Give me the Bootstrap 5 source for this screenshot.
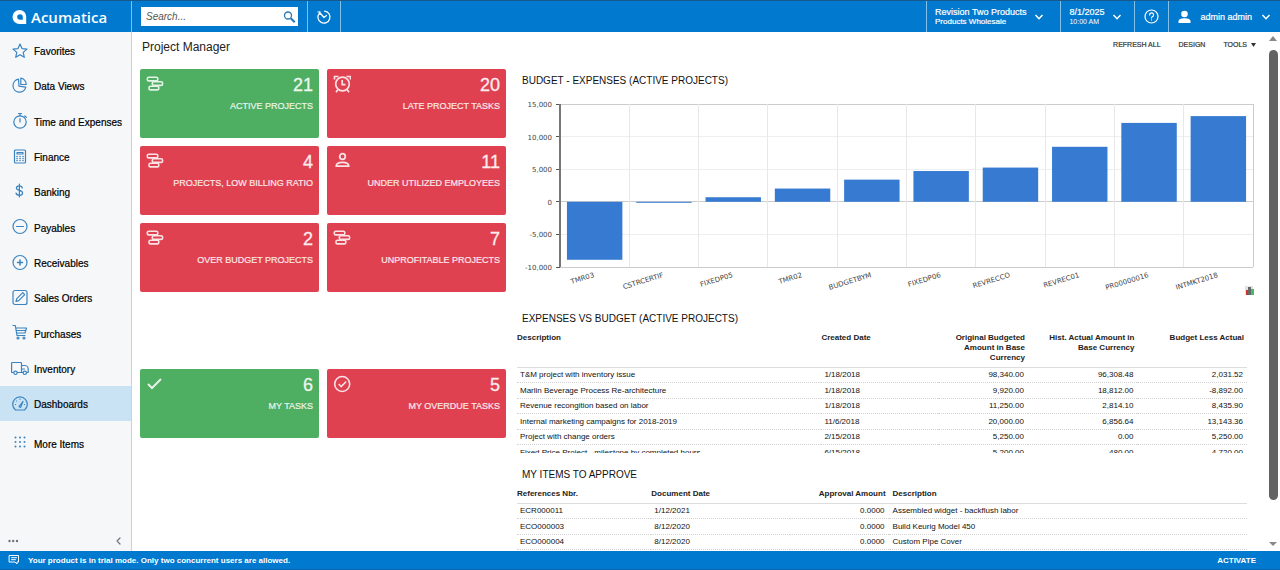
<!DOCTYPE html>
<html lang="en">
<head>
<meta charset="utf-8">
<meta name="viewport" content="width=device-width, initial-scale=1">
<title>Project Manager - Acumatica</title>
<link href="https://cdn.jsdelivr.net/npm/bootstrap@5.3.0/dist/css/bootstrap.min.css" rel="stylesheet">
<style>
:root{--brand:#0079cf;--line:#83c1ea;--ico:#3c84bf}
body{font-family:"Liberation Sans",Arial,sans-serif;font-size:10px;line-height:12px;color:#111;background:#fff}
button{font:inherit;color:inherit;background:none;border:0;padding:0}
a{color:inherit;text-decoration:none}
svg{display:block;flex:none}
.stroke{fill:none;stroke:currentColor;stroke-width:1.2;stroke-linecap:round;stroke-linejoin:round}
.topbar{background:var(--brand);color:#fff;border-top:1px solid #17598c;min-height:32px}
.topbar .cell{border-left:1px solid var(--line)}
.logo-box{width:131px;padding-left:12px;gap:4px;font:600 15px/18px "Open Sans",sans-serif}
.search-box{width:157px;height:19px;background:#fff;margin:0 9px}
.search-box input{border:0;outline:0;min-width:0;font-size:10px;font-style:italic;padding:0 0 0 5px;background:none;color:#333}
.search-box input::placeholder{color:#555;opacity:1}
.fs-9{font-size:9px;line-height:10px;-webkit-text-stroke:.2px}
.fs-8{font-size:8px;line-height:9px;-webkit-text-stroke:.2px}
.fs-7{font-size:7px;line-height:10px}
.side{width:132px;background:#f5f7f9;border-right:1px solid #c3d3e2;padding-top:1px}
.side a{height:35px;padding-left:11px;gap:5px;color:#000;-webkit-text-stroke:.2px}
.side li:nth-child(3n) a{height:36px}
.side li:last-child a{margin-top:4px}
.side a span{padding-top:3px}
.side a svg{color:var(--ico);width:18px;height:18px}
.side a.active{background:#c9e3f5}
.page-head{padding:8px 10px 0;margin-bottom:15px}
.page-title{font-size:12px;line-height:14px;color:#222}
.tools{gap:18px;color:#333;-webkit-text-stroke:.2px}
.board{padding:0 12px 0 8px}
.tile{min-height:69px;border-radius:2px;color:#fff;padding:6px;background:#e04151}
.tile.good{background:#4eae62}
.tile svg{width:18px;height:18px;opacity:.85}
.tile .num{font-size:18px;line-height:20px;opacity:.9;-webkit-text-stroke:.3px}
.tile .cap{font-size:9px;line-height:12px;opacity:.88;margin-top:5px;-webkit-text-stroke:.2px}
.tile-gap{margin-top:77px}
.chart-panel{padding-top:6px}
.section-title{font-size:10px;line-height:12px;margin:0;padding-left:8px;color:#111;font-weight:400}
.chart{width:100%;height:auto;font-family:"DejaVu Sans",sans-serif;font-size:7px;fill:#444}
.list{width:calc(100% - 10px);table-layout:fixed;font-size:8px;line-height:10px;color:#111;margin-left:3px}
.list th{padding:0 3px 0 0;vertical-align:top;color:#222;border-bottom:1px solid #ddd}
.list td{padding:1px 4px 0 3px;height:15px;border-bottom:1px dotted #d2d2d2;white-space:nowrap}
.list tr:nth-child(even) td{height:16px}
.clip-a{height:120px;overflow:hidden}
.clip-b{height:61px;overflow:hidden}
.list.plan thead th{height:34px}
.list.appr thead th{height:14px}
.scroller{width:14px;color:#888}
.thumb{width:9px;border-radius:5px;background:#636363;height:88%}
.statusbar{background:var(--brand);color:#fff;height:19px;border-bottom:1px solid #0b67ad;font-size:8px;font-weight:700}
.statusbar span,.statusbar button{padding-top:1px}
</style>
</head>
<body class="vh-100 d-flex flex-column overflow-hidden">
<svg width="0" height="0" class="position-absolute" aria-hidden="true">
  <symbol id="gantt" viewBox="0 0 18 18"><g fill="none" stroke="currentColor" stroke-width="1.600"><rect x="1.300" y="2.300" width="10.500" height="3.600" rx="1.500"/><rect x="6.300" y="6.800" width="10.300" height="3.600" rx="1.500"/><rect x="3" y="11.300" width="9.800" height="3.600" rx="1.500"/></g></symbol>
  <symbol id="down" viewBox="0 0 10 10"><path d="M1.500 3 5 6.700 8.500 3" fill="none" stroke="currentColor" stroke-width="1.500"/></symbol>
</svg>

<header class="topbar d-flex align-items-stretch">
  <a href="#" class="logo-box d-flex align-items-center">
    <svg width="15" height="14" viewBox="0 0 15 14"><path fill="#fff" fill-rule="evenodd" d="M7.500 0a7 7 0 1 0 0 14h6.700V7A6.700 6.700 0 0 0 7.500 0ZM8 4.200a2.800 2.800 0 0 1 2.800 2.800v2.800H8a2.800 2.800 0 0 1 0-5.600Z"/></svg>
    <span>Acumatica</span>
  </a>
  <div class="cell d-flex align-items-center">
    <label class="search-box d-flex align-items-center">
      <input type="text" class="flex-grow-1" placeholder="Search..." aria-label="Search">
      <svg width="16" height="16" viewBox="0 0 16 16" fill="none" stroke="#2878b8"><circle cx="6" cy="6.500" r="3.500" stroke-width="1.300"/><path d="m8.700 9.200 4 4" stroke-width="2"/></svg>
    </label>
  </div>
  <div class="cell d-flex"><button class="px-2" aria-label="Recent">
    <svg width="16" height="16" viewBox="0 0 16 16" class="stroke"><path d="M3.300 4.300a6 6 0 1 0 5.200-2.200M2 3l2-.2.200 2.600M5 5l3 3.500 2.500-2"/></svg></button></div>
  <div class="cell me-auto"></div>
  <div class="cell d-flex"><button class="d-flex align-items-center text-start ps-2 pe-3 gap-2">
    <span><span class="d-block fs-9">Revision Two Products</span><span class="d-block fs-8">Products Wholesale</span></span>
    <svg width="10" height="10"><use href="#down"/></svg></button></div>
  <div class="cell d-flex"><button class="d-flex align-items-center text-start px-2 gap-2">
    <span><span class="d-block fs-9">8/1/2025</span><span class="d-block fs-7">10:00 AM</span></span>
    <svg width="10" height="10" class="me-1"><use href="#down"/></svg></button></div>
  <div class="cell d-flex"><button class="px-2" aria-label="Help">
    <svg width="17" height="17" viewBox="0 0 17 17" class="stroke"><circle cx="8.500" cy="8.500" r="6.500"/><path d="M6.600 7a2 2 0 1 1 2.700 1.800c-.6.300-.8.500-.8 1.100M8.500 11.900v.1"/></svg></button></div>
  <div class="cell d-flex"><button class="d-flex align-items-center ps-2 pe-2 gap-2">
    <svg width="15" height="14" viewBox="0 0 14 14" fill="#fff"><circle cx="7" cy="4" r="3.300"/><path d="M1 13v-1.700C1 9 4 8.200 7 8.200s6 .8 6 3.100V13Z"/></svg>
    <span class="fs-9">admin admin</span>
    <svg width="12" height="10" viewBox="0 0 10 10"><use href="#down"/></svg></button></div>
</header>

<div class="d-flex flex-grow-1 overflow-hidden">
  <nav class="side d-flex flex-column flex-shrink-0" aria-label="Workspaces">
    <ul class="list-unstyled m-0">
      <li><a href="#" class="d-flex align-items-center"><svg viewBox="0 0 18 18" class="stroke"><path d="m9 2 2 4.600 5 .5-3.800 3.300 1.100 4.900L9 12.700l-4.300 2.600 1.100-4.900L2 7.100l5-.5Z"/></svg><span>Favorites</span></a></li>
      <li><a href="#" class="d-flex align-items-center"><svg viewBox="0 0 18 18" class="stroke"><path d="M7.500 2.200a6.500 6.500 0 1 0 7.300 8L8 9.200ZM9.800 1.200a6 6 0 0 1 5.400 6.300H9.800Z"/></svg><span>Data Views</span></a></li>
      <li><a href="#" class="d-flex align-items-center"><svg viewBox="0 0 18 18" class="stroke"><circle cx="9" cy="10" r="6.200"/><path d="M7.500 1.500h3M9 1.500v2.300M9 6.500V10M13.800 4l1.500 1.300"/></svg><span>Time and Expenses</span></a></li>
      <li><a href="#" class="d-flex align-items-center"><svg viewBox="0 0 18 18" class="stroke"><rect x="3.500" y="2" width="11" height="13" rx="1"/><path d="M6 4.500h6V6H6Z"/><path d="M6 8.500h.1M9 8.500h.1M12 8.500h.1M6 10.500h.1M9 10.500h.1M12 10.500h.1M6 12.500h.1M9 12.500h.1M12 12.500h.1" stroke-width="1.500"/></svg><span>Finance</span></a></li>
      <li><a href="#" class="d-flex align-items-center"><svg viewBox="0 0 18 18" class="stroke"><path d="M11.300 5c-.2-1.500-1.300-2.200-3-2.200S5.400 3.700 5.400 5c0 3.300 6.200 1.500 6.200 5 0 1.500-1.200 2.300-3.200 2.300S5.300 11.400 5 10M8.400 1v13"/></svg><span>Banking</span></a></li>
      <li><a href="#" class="d-flex align-items-center"><svg viewBox="0 0 18 18" class="stroke"><circle cx="9" cy="8.500" r="7"/><path d="M5.500 8.500h7"/></svg><span>Payables</span></a></li>
      <li><a href="#" class="d-flex align-items-center"><svg viewBox="0 0 18 18" class="stroke"><circle cx="9" cy="8.500" r="7"/><path d="M6.500 8.500h5M9 6v5" stroke-width="1.500"/></svg><span>Receivables</span></a></li>
      <li><a href="#" class="d-flex align-items-center"><svg viewBox="0 0 18 18" class="stroke"><rect x="2" y="1.500" width="14" height="14" rx="2"/><path d="m5 12.500.8-2.800 6-6 1.900 1.900-6 6Z"/></svg><span>Sales Orders</span></a></li>
      <li><a href="#" class="d-flex align-items-center"><svg viewBox="0 0 18 18" class="stroke"><path d="M2 1.500h2.300L6 11.500h8M5 4h10.500L14 9H5.700M5.300 6.500h9"/><circle cx="7" cy="14" r="1"/><circle cx="13" cy="14" r="1"/></svg><span>Purchases</span></a></li>
      <li><a href="#" class="d-flex align-items-center"><svg viewBox="0 0 18 18" class="stroke"><path d="M2.500 12.500H1.200a.6.600 0 0 1-.6-.6V3.100c0-.4.200-.6.600-.6h8.700c.3 0 .6.200.6.600v9.400h-4M10.500 5.500h3.700c2 0 3 2.500 3 4v3h-1.400M10.500 12.500h1.300M10.500 9h3"/><circle cx="4.500" cy="12.800" r="1.700"/><circle cx="13.800" cy="12.800" r="1.700"/></svg><span>Inventory</span></a></li>
      <li><a href="#" class="active d-flex align-items-center" aria-current="page"><svg viewBox="0 0 18 18" class="stroke"><path d="M4.500 15A7.300 7.300 0 1 1 13.500 15Z"/><path d="m8 11.500 4-5-2.500 6ZM4.500 9.500h.1M5.500 6h.1M9 4.200h.1M13.500 9.500h.1"/></svg><span>Dashboards</span></a></li>
      <li><a href="#" class="d-flex align-items-center"><svg viewBox="0 0 18 18" fill="currentColor"><g id="dots3"><circle cx="4.500" cy="3.500" r="1"/><circle cx="9" cy="3.500" r="1"/><circle cx="13.500" cy="3.500" r="1"/></g><use href="#dots3" y="4.500"/><use href="#dots3" y="9"/></svg><span>More Items</span></a></li>
    </ul>
    <div class="mt-auto d-flex justify-content-between px-2 pb-1 text-secondary">
      <button aria-label="Options"><svg width="11" height="12" viewBox="0 0 11 12" fill="currentColor"><circle cx="1.500" cy="6" r="1.200"/><circle cx="5.200" cy="6" r="1.200"/><circle cx="9" cy="6" r="1.200"/></svg></button>
      <button aria-label="Collapse"><svg width="10" height="12" viewBox="0 0 10 12" class="stroke"><path d="M7 3 4 6l3 3"/></svg></button>
    </div>
  </nav>

  <main class="flex-grow-1 overflow-hidden">
    <div class="page-head d-flex justify-content-between align-items-start">
      <h1 class="page-title fw-normal m-0">Project Manager</h1>
      <div class="tools d-flex fs-7"><button>REFRESH ALL</button><button>DESIGN</button><button class="d-flex align-items-center gap-1">TOOLS <svg width="5" height="4"><path d="M0 0h5L2.500 4Z" fill="#333"/></svg></button></div>
    </div>
    <div class="board">
      <div class="row gx-2">
        <div class="col-4">
          <div class="row g-2">
            <div class="col-6"><a href="#" class="tile good d-block"><span class="d-flex justify-content-between"><svg><use href="#gantt"/></svg><span class="num">21</span></span><span class="cap d-block text-end">ACTIVE PROJECTS</span></a></div>
            <div class="col-6"><a href="#" class="tile d-block"><span class="d-flex justify-content-between"><svg viewBox="0 0 18 18" fill="none" stroke="currentColor" stroke-width="1.700"><circle cx="9.500" cy="9" r="6.800"/><path d="M9.200 5v4.700h3.300M1.500 4.500V1.500h4M17.500 4.500V1.500h-4M5 14.500l-2 2.700M14 14.500l2 2.700"/></svg><span class="num">20</span></span><span class="cap d-block text-end">LATE PROJECT TASKS</span></a></div>
            <div class="col-6"><a href="#" class="tile d-block"><span class="d-flex justify-content-between"><svg><use href="#gantt"/></svg><span class="num">4</span></span><span class="cap d-block text-end">PROJECTS, LOW BILLING RATIO</span></a></div>
            <div class="col-6"><a href="#" class="tile d-block"><span class="d-flex justify-content-between"><svg viewBox="0 0 18 18" fill="none" stroke="currentColor" stroke-width="1.800"><circle cx="9.500" cy="4.500" r="2.800"/><path d="M3.300 14.200c0-5 12.400-5 12.400 0Z"/></svg><span class="num">11</span></span><span class="cap d-block text-end">UNDER UTILIZED EMPLOYEES</span></a></div>
            <div class="col-6"><a href="#" class="tile d-block"><span class="d-flex justify-content-between"><svg><use href="#gantt"/></svg><span class="num">2</span></span><span class="cap d-block text-end">OVER BUDGET PROJECTS</span></a></div>
            <div class="col-6"><a href="#" class="tile d-block"><span class="d-flex justify-content-between"><svg><use href="#gantt"/></svg><span class="num">7</span></span><span class="cap d-block text-end">UNPROFITABLE PROJECTS</span></a></div>
          </div>
          <div class="row gx-2 tile-gap">
            <div class="col-6"><a href="#" class="tile good d-block"><span class="d-flex justify-content-between"><svg viewBox="0 0 18 18" fill="none" stroke="currentColor" stroke-width="2"><path d="m2 9 4 4L15 4"/></svg><span class="num">6</span></span><span class="cap d-block text-end">MY TASKS</span></a></div>
            <div class="col-6"><a href="#" class="tile d-block"><span class="d-flex justify-content-between"><svg viewBox="0 0 18 18" fill="none" stroke="currentColor" stroke-width="1.600"><circle cx="9.200" cy="9" r="7.500"/><path d="m5.700 9 2.500 2.500 5-5"/></svg><span class="num">5</span></span><span class="cap d-block text-end">MY OVERDUE TASKS</span></a></div>
          </div>
        </div>
        <div class="col-8">
          <section class="chart-panel">
            <h2 class="section-title">BUDGET - EXPENSES (ACTIVE PROJECTS)</h2>
            <svg class="chart" viewBox="0 0 740 210" role="img" aria-label="Budget less expenses by project">
              <g id="grid" fill="none" shape-rendering="crispEdges"></g>
              <g id="bars" fill="#367bd1"></g>
              <g id="labels"></g>
              <g transform="translate(731 198)"><path d="M0 1h8v9H0Z" fill="#dde3e8"/><path d="M1 5h2v5H1Z" fill="#c33"/><path d="M3 2h3v8H3Z" fill="#666"/><path d="M6 4h3v6H6Z" fill="#4b6"/></g>
            </svg>
          </section>
          <section class="pt-3">
            <h2 class="section-title mb-2">EXPENSES VS BUDGET (ACTIVE PROJECTS)</h2>
            <div class="clip-a">
              <table class="list plan">
                <colgroup><col style="width:41.700%"><col style="width:16%"><col style="width:12.300%"><col style="width:15%"><col></colgroup>
                <thead><tr><th>Description</th><th>Created Date</th><th class="text-end">Original Budgeted Amount in Base Currency</th><th class="text-end ps-3">Hist. Actual Amount in Base Currency</th><th class="text-end">Budget Less Actual</th></tr></thead>
                <tbody>
                  <tr><td>T&amp;M project with inventory issue</td><td>1/18/2018</td><td class="text-end">98,340.00</td><td class="text-end">96,308.48</td><td class="text-end">2,031.52</td></tr>
                  <tr><td>Marlin Beverage Process Re-architecture</td><td>1/18/2018</td><td class="text-end">9,920.00</td><td class="text-end">18,812.00</td><td class="text-end">-8,892.00</td></tr>
                  <tr><td>Revenue recongition based on labor</td><td>1/18/2018</td><td class="text-end">11,250.00</td><td class="text-end">2,814.10</td><td class="text-end">8,435.90</td></tr>
                  <tr><td>Internal marketing campaigns for 2018-2019</td><td>11/6/2018</td><td class="text-end">20,000.00</td><td class="text-end">6,856.64</td><td class="text-end">13,143.36</td></tr>
                  <tr><td>Project with change orders</td><td>2/15/2018</td><td class="text-end">5,250.00</td><td class="text-end">0.00</td><td class="text-end">5,250.00</td></tr>
                  <tr><td>Fixed Price Project - milestone by completed hours</td><td>6/15/2018</td><td class="text-end">5,200.00</td><td class="text-end">480.00</td><td class="text-end">4,720.00</td></tr>
                </tbody>
              </table>
            </div>
          </section>
          <section class="pt-3">
            <h2 class="section-title mb-2">MY ITEMS TO APPROVE</h2>
            <div class="clip-b">
              <table class="list appr">
                <colgroup><col style="width:18.400%"><col style="width:19%"><col style="width:13.500%"><col></colgroup>
                <thead><tr><th>References Nbr.</th><th>Document Date</th><th class="text-end">Approval Amount</th><th class="ps-1">Description</th></tr></thead>
                <tbody>
                  <tr><td>ECR000011</td><td>1/12/2021</td><td class="text-end">0.0000</td><td class="ps-1">Assembled widget - backflush labor</td></tr>
                  <tr><td>ECO000003</td><td>8/12/2020</td><td class="text-end">0.0000</td><td class="ps-1">Build Keurig Model 450</td></tr>
                  <tr><td>ECO000004</td><td>8/12/2020</td><td class="text-end">0.0000</td><td class="ps-1">Custom Pipe Cover</td></tr>
                </tbody>
              </table>
            </div>
          </section>
        </div>
      </div>
    </div>
  </main>

  <div class="scroller d-flex flex-column align-items-center flex-shrink-0 py-1" aria-hidden="true">
    <svg width="8" height="6" class="mb-2"><path d="M0 5h8L4 0Z" fill="currentColor"/></svg>
    <div class="thumb"></div>
    <svg width="8" height="6" class="mt-auto"><path d="M0 1h8L4 5Z" fill="currentColor"/></svg>
  </div>
</div>

<footer class="statusbar d-flex align-items-center flex-shrink-0 ps-2">
  <svg width="12" height="12" viewBox="0 0 12 12" class="stroke"><path d="M1.500 1.500h9v6.500H9v2L7 8H1.500ZM3.500 3.700h5M3.500 5.700h4" stroke-width="1"/></svg>
  <span class="ps-2">Your product is in trial mode. Only two concurrent users are allowed.</span>
  <button class="ms-auto me-4">ACTIVATE</button>
</footer>

<script src="https://cdn.jsdelivr.net/npm/bootstrap@5.3.0/dist/js/bootstrap.bundle.min.js"></script>
<script>
// Column chart: x runs over ten projects, y from -10,000 to 15,000
const data = [["TMR03",-8892],["CSTRCERTIF",-150],["FIXEDP05",700],["TMR02",2031],["BUDGETBYM",3400],["FIXEDP06",4720],["REVRECCO",5250],["REVREC01",8436],["PR00000016",12100],["INTMKT2018",13143]];
const left = 46, right = 739, top0 = 17, bottom = 180, step = (right - left) / data.length;
const y = v => top0 + (15000 - v) / 25000 * (bottom - top0);
let grid = "", bars = "", labels = "";
for (let v = -10000; v <= 15000; v += 5000) {
  const edge = v === 0 || v === 15000 || v === -10000;
  grid += `<path stroke="${edge ? "#ccc" : "#eee"}" d="M${left} ${y(v)}H${right}"/><path stroke="#555" d="M${left - 4} ${y(v)}h4"/>`;
  labels += `<text x="${left - 8}" y="${y(v) + 3}" text-anchor="end">${v.toLocaleString("en-US")}</text>`;
}
data.forEach(([name, v], i) => {
  const x = left + i * step;
  grid += `<path stroke="${i === 9 ? "#ccc" : "#e8e8e8"}" d="M${x + step} ${top0}V${bottom}"/>`;
  bars += `<rect x="${x + step * .1}" y="${Math.min(y(v), y(0))}" width="${step * .8}" height="${Math.max(1, Math.abs(y(v) - y(0)))}"/>`;
  labels += `<text text-anchor="end" transform="translate(${x + step / 2} ${bottom + 10}) rotate(-17)">${name}</text>`;
});
grid += `<path stroke="#777" stroke-width="2" d="M${left} ${top0}V${bottom}"/>`;
document.getElementById("grid").innerHTML = grid;
document.getElementById("bars").innerHTML = bars;
document.getElementById("labels").innerHTML = labels;
</script>
</body>
</html>
